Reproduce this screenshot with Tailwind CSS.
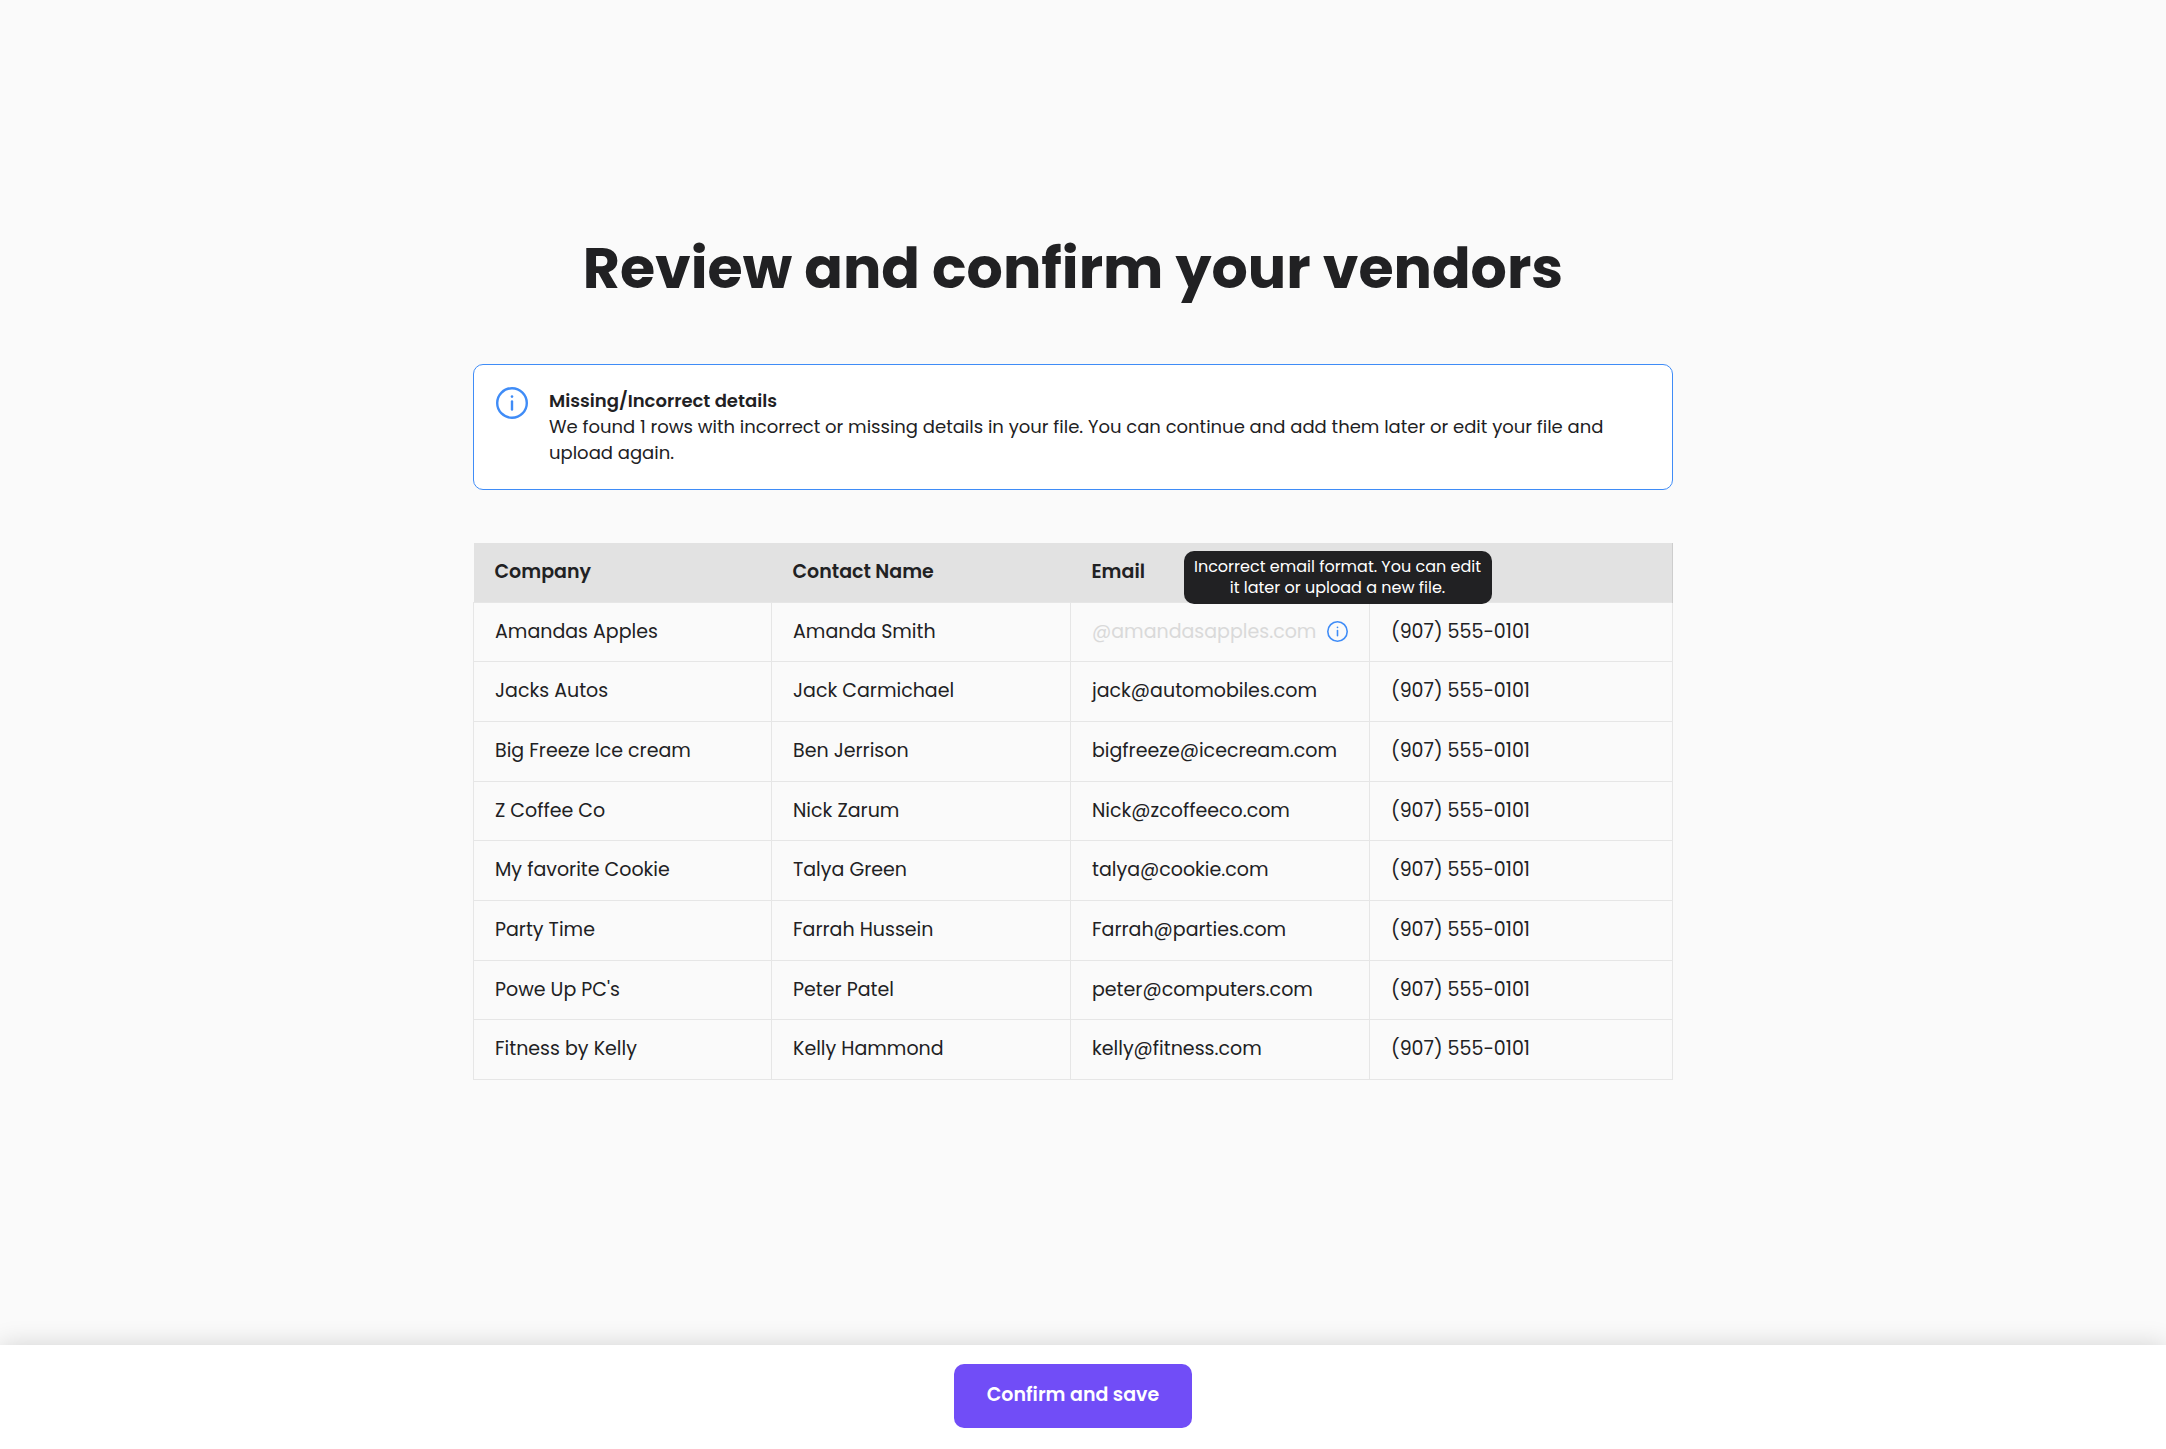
<!DOCTYPE html>
<html lang="en">
<head>
<meta charset="utf-8">
<meta name="viewport" content="width=device-width, initial-scale=1">
<title>Review and confirm your vendors</title>
<script src="https://cdn.jsdelivr.net/npm/@tailwindcss/browser@4"></script>
</head>
<body class="flex min-h-screen flex-col bg-[#fafafa] font-['Poppins','Inter',sans-serif] text-[19px] text-[#212123]">
<main class="mr-5 flex flex-1 flex-col items-center px-6 pt-[232px] pb-24">
  <div class="w-full max-w-[1200px]">
    <h1 class="text-center text-[57px] leading-[72px] font-bold">Review and confirm your vendors</h1>

    <section class="mt-[60px] flex gap-[21px] rounded-[10px] border border-[#3f8cf7] bg-white px-[22px] pt-[22px] pb-[23px]">
      <svg class="size-8 shrink-0 text-[#3f8cf7]" viewBox="0 0 32 32" fill="none" stroke="currentColor" stroke-width="2.4" aria-hidden="true"><circle cx="16" cy="16" r="14.8"/><path d="M16 14.4v8.2" stroke-linecap="round"/><circle cx="16" cy="9.6" r="1.3" fill="currentColor" stroke="none"/></svg>
      <div class="text-lg leading-[26px]">
        <h2 class="leading-[27px] font-semibold">Missing/Incorrect details</h2>
        <p>We found 1 rows with incorrect or missing details in your file. You can continue and add them later or edit your file and upload again.</p>
      </div>
    </section>

    <table class="mt-[53px] h-[537px] w-full table-fixed border-collapse text-left [&_td]:h-[59px] [&_td]:border [&_td]:border-[#e6e6e6] [&_td]:px-[21px] [&_th]:h-[59px] [&_th]:px-[21px]">
      <colgroup><col class="w-[298px]"><col class="w-[299px]"><col class="w-[299px]"><col></colgroup>
      <thead class="bg-[#e2e2e2]">
        <tr><th class="font-semibold">Company</th><th class="font-semibold">Contact Name</th><th class="font-semibold">Email</th><th class="border-r border-[#cdcdcd]"></th></tr>
      </thead>
      <tbody>
        <tr><td>Amandas Apples</td><td>Amanda Smith</td><td>
          <div class="flex items-center justify-between">
            <span class="text-[#d9d9d9]">@amandasapples.com</span>
            <button type="button" class="relative size-[21px] shrink-0" aria-describedby="email-tip">
              <svg class="size-[21px] text-[#3f8cf7]" viewBox="0 0 32 32" fill="none" stroke="currentColor" stroke-width="2.4" aria-hidden="true"><circle cx="16" cy="16" r="14.8"/><path d="M16 14.4v8.2" stroke-linecap="round"/><circle cx="16" cy="9.6" r="1.3" fill="currentColor" stroke="none"/></svg>
              <span id="email-tip" role="tooltip" class="absolute bottom-full left-1/2 mb-[17px] w-[308px] -translate-x-1/2 rounded-[10px] bg-[#212123] px-2 pt-[5px] pb-1.5 text-center text-base leading-[21px] text-white">Incorrect email format. You can edit it later or upload a new file.</span>
            </button>
          </div></td><td>(907) 555-0101</td></tr>
        <tr><td>Jacks Autos</td><td>Jack Carmichael</td><td>jack@automobiles.com</td><td>(907) 555-0101</td></tr>
        <tr><td>Big Freeze Ice cream</td><td>Ben Jerrison</td><td>bigfreeze@icecream.com</td><td>(907) 555-0101</td></tr>
        <tr><td>Z Coffee Co</td><td>Nick Zarum</td><td>Nick@zcoffeeco.com</td><td>(907) 555-0101</td></tr>
        <tr><td>My favorite Cookie</td><td>Talya Green</td><td>talya@cookie.com</td><td>(907) 555-0101</td></tr>
        <tr><td>Party Time</td><td>Farrah Hussein</td><td>Farrah@parties.com</td><td>(907) 555-0101</td></tr>
        <tr><td>Powe Up PC's</td><td>Peter Patel</td><td>peter@computers.com</td><td>(907) 555-0101</td></tr>
        <tr><td>Fitness by Kelly</td><td>Kelly Hammond</td><td>kelly@fitness.com</td><td>(907) 555-0101</td></tr>
      </tbody>
    </table>
  </div>
</main>
<footer class="bg-white pt-[19px] pr-5 pb-[21px] text-center shadow-[0_0_24px_rgba(0,0,0,0.16)]">
  <button type="button" class="h-16 rounded-[10px] bg-[#714df7] px-[33px] pb-0.5 font-semibold text-white">Confirm and save</button>
</footer>
</body>
</html>
